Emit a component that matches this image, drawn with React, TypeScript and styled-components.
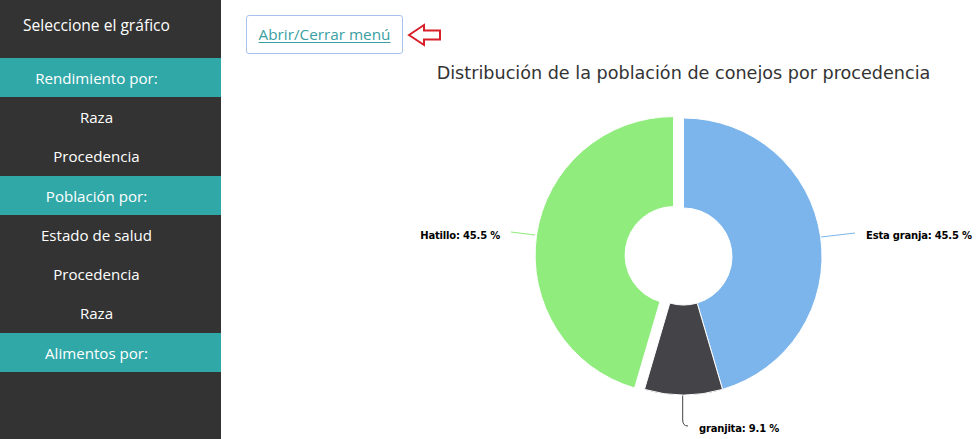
import React from "react";
import styled, { createGlobalStyle } from "styled-components";

const GlobalStyle = createGlobalStyle`
  html, body { margin: 0; padding: 0; background: #ffffff; }
  body { font-family: "Open Sans", "Noto Sans", sans-serif; }
  * { box-sizing: border-box; }
`;

const Page = styled.div`
  display: flex;
  width: 977px;
  height: 439px;
  overflow: hidden;
`;

const Sidebar = styled.nav`
  width: 221px;
  flex: 0 0 221px;
  background: #333333;
  display: flex;
  flex-direction: column;
`;

const SidebarHeader = styled.div`
  height: 58px;
  padding: 14px 28px 0 0;
  line-height: 22px;
  color: #ffffff;
  font-size: 15.6px;
  text-align: center;
`;

const MenuRow = styled.div<{ $section?: boolean }>`
  height: 39.3px;
  display: flex;
  align-items: center;
  justify-content: center;
  padding-right: 28px;
  font-size: 15.1px;
  color: #ffffff;
  background: ${(p) => (p.$section ? "#31a8a8" : "transparent")};
`;

const Main = styled.main`
  flex: 1;
  display: flex;
  flex-direction: column;
`;

const Toolbar = styled.div`
  display: flex;
  align-items: center;
  gap: 4px;
  padding: 15px 0 0 25px;
`;

const ToggleButton = styled.button`
  width: 157px;
  height: 39px;
  padding: 0 0 1px;
  background: #ffffff;
  border: 1px solid #a8c2ee;
  border-radius: 3px;
  font-family: "Open Sans", "Noto Sans", sans-serif;
  font-size: 15.3px;
  color: #3a9ea2;
  text-decoration: underline;
  text-underline-offset: 2px;
  cursor: pointer;
`;

const ChartSvg = styled.svg`
  display: block;
`;

const ArrowIcon = () => (
  <svg width="36" height="24" viewBox="0 0 36 24">
    <polygon
      points="2,12 17,2 17,7.5 33,7.5 33,16.5 17,16.5 17,22"
      fill="#ffffff"
      stroke="#d8202a"
      strokeWidth="2"
      strokeLinejoin="miter"
    />
  </svg>
);

const rad = (d: number) => (d * Math.PI) / 180;
const pt = (cx: number, cy: number, r: number, a: number) =>
  [cx + r * Math.sin(rad(a)), cy - r * Math.cos(rad(a))] as const;

function arc(cx: number, cy: number, R: number, r: number, a0: number, a1: number) {
  const large = a1 - a0 > 180 ? 1 : 0;
  const [x0, y0] = pt(cx, cy, R, a0);
  const [x1, y1] = pt(cx, cy, R, a1);
  const [x2, y2] = pt(cx, cy, r, a1);
  const [x3, y3] = pt(cx, cy, r, a0);
  return `M${x0} ${y0} A${R} ${R} 0 ${large} 1 ${x1} ${y1} L${x2} ${y2} A${r} ${r} 0 ${large} 0 ${x3} ${y3} Z`;
}

const CX = 462.5;
const CY = 202.5;
const R = 138.5;
const r = 48.5;

const data = [
  { name: "Esta granja", value: 5, color: "#7cb5ec", sliced: false },
  { name: "granjita", value: 1, color: "#434348", sliced: false },
  { name: "Hatillo", value: 5, color: "#90ed7d", sliced: true },
];

const labelStyle = {
  fontFamily: '"DejaVu Sans", Verdana, sans-serif',
  fontSize: "10px",
  fontWeight: 700,
  letterSpacing: "-0.2px",
} as const;

export default function App() {
  const total = data.reduce((s, d) => s + d.value, 0);
  let acc = 0;
  const slices = data.map((d) => {
    const a0 = (acc / total) * 360;
    acc += d.value;
    const a1 = (acc / total) * 360;
    const mid = (a0 + a1) / 2;
    const off = d.sliced ? 10 : 0;
    const dx = off * Math.sin(rad(mid));
    const dy = -off * Math.cos(rad(mid));
    return { ...d, a0, a1, dx, dy };
  });

  return (
    <>
      <GlobalStyle />
      <Page>
        <Sidebar>
          <SidebarHeader>Seleccione el gráfico</SidebarHeader>
          <MenuRow $section>Rendimiento por:</MenuRow>
          <MenuRow>Raza</MenuRow>
          <MenuRow>Procedencia</MenuRow>
          <MenuRow $section>Población por:</MenuRow>
          <MenuRow>Estado de salud</MenuRow>
          <MenuRow>Procedencia</MenuRow>
          <MenuRow>Raza</MenuRow>
          <MenuRow $section>Alimentos por:</MenuRow>
        </Sidebar>
        <Main>
          <Toolbar>
            <ToggleButton>Abrir/Cerrar menú</ToggleButton>
            <ArrowIcon />
          </Toolbar>
          <ChartSvg width={756} height={385} viewBox="0 0 756 385">
            <text
              x={CX}
              y={24.7}
              textAnchor="middle"
              fill="#333333"
              style={{ fontFamily: '"DejaVu Sans", Verdana, sans-serif', fontSize: "17.6px" }}
            >
              Distribución de la población de conejos por procedencia
            </text>
            <path d="M600 183 L634 179" stroke="#7cb5ec" strokeWidth={1} fill="none" />
            <path d="M314 181 L290 178" stroke="#90ed7d" strokeWidth={1} fill="none" />
            <path
              d="M461.7 341 L461.7 366 Q461.7 372 467 372"
              stroke="#434348"
              strokeWidth={1}
              fill="none"
            />
            {slices.map((s) => (
              <path
                key={s.name}
                d={arc(CX + s.dx, CY + s.dy, R, r, s.a0, s.a1)}
                fill={s.color}
                stroke="#ffffff"
                strokeWidth={1}
                strokeLinejoin="round"
              />
            ))}
            <g style={labelStyle} fill="#000000" stroke="#ffffff" strokeWidth={2} paintOrder="stroke">
              <text x={645} y={185}>Esta granja: 45.5 %</text>
              <text x={279} y={185} textAnchor="end">Hatillo: 45.5 %</text>
              <text x={478} y={377.5}>granjita: 9.1 %</text>
            </g>
          </ChartSvg>
        </Main>
      </Page>
    </>
  );
}
